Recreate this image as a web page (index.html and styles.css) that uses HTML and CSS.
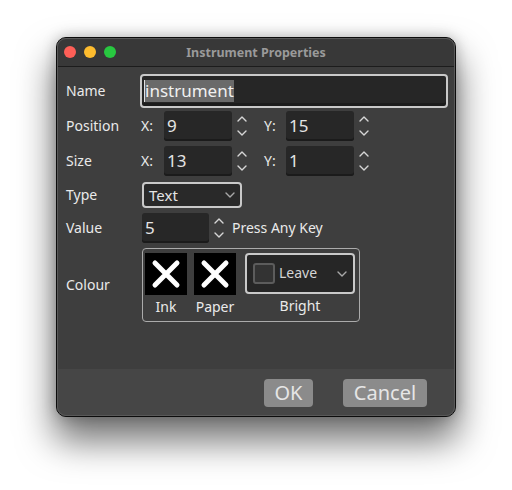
FILE: index.html
```html
<!DOCTYPE html>
<html>
<head>
<meta charset="utf-8">
<link rel="stylesheet" href="styles.css">
</head>
<body>
<div class="stage">
<div class="window">
  <div class="titlebar">
    <div class="lights">
      <span class="light red"></span><span class="light yellow"></span><span class="light green"></span>
    </div>
    <div class="title">Instrument Properties</div>
  </div>
  <div class="content">
    <div class="row row-name">
      <div class="label">Name</div>
      <div class="textinput"><span class="sel">instrument</span></div>
    </div>
    <div class="row row-pos">
      <div class="label">Position</div>
      <div class="field">
        <span class="axis">X:</span>
        <div class="spin">9</div>
        <div class="arrows"><svg width="10" height="24" viewBox="0 0 10 24"><path d="M1 7 L5 3 L9 7" /><path d="M1 17 L5 21 L9 17" /></svg></div>
        <span class="axis axis-y">Y:</span>
        <div class="spin">15</div>
        <div class="arrows"><svg width="10" height="24" viewBox="0 0 10 24"><path d="M1 7 L5 3 L9 7" /><path d="M1 17 L5 21 L9 17" /></svg></div>
      </div>
    </div>
    <div class="row row-size">
      <div class="label">Size</div>
      <div class="field">
        <span class="axis">X:</span>
        <div class="spin">13</div>
        <div class="arrows"><svg width="10" height="24" viewBox="0 0 10 24"><path d="M1 7 L5 3 L9 7" /><path d="M1 17 L5 21 L9 17" /></svg></div>
        <span class="axis axis-y">Y:</span>
        <div class="spin">1</div>
        <div class="arrows"><svg width="10" height="24" viewBox="0 0 10 24"><path d="M1 7 L5 3 L9 7" /><path d="M1 17 L5 21 L9 17" /></svg></div>
      </div>
    </div>
    <div class="row row-type">
      <div class="label">Type</div>
      <div class="combo combo-type">
        <span>Text</span>
        <svg class="chev" width="10" height="6" viewBox="0 0 10 6"><path d="M1 1 L5 5 L9 1" /></svg>
      </div>
    </div>
    <div class="row row-value">
      <div class="label">Value</div>
      <div class="field field-value">
        <div class="spin spin-value">5</div>
        <div class="arrows"><svg width="10" height="24" viewBox="0 0 10 24"><path d="M1 7 L5 3 L9 7" /><path d="M1 17 L5 21 L9 17" /></svg></div>
        <span class="hint">Press Any Key</span>
      </div>
    </div>
    <div class="row row-colour">
      <div class="label">Colour</div>
      <div class="group">
        <div class="gcol">
          <div class="swatch"><svg width="42" height="42" viewBox="0 0 42 42"><path d="M10 10 L32 32 M32 10 L10 32" /></svg></div>
          <div class="glabel">Ink</div>
        </div>
        <div class="gcol">
          <div class="swatch"><svg width="42" height="42" viewBox="0 0 42 42"><path d="M10 10 L32 32 M32 10 L10 32" /></svg></div>
          <div class="glabel">Paper</div>
        </div>
        <div class="gcol">
          <div class="combo combo-bright">
            <span class="check"></span>
            <span class="leave">Leave</span>
            <svg class="chev" width="10" height="6" viewBox="0 0 10 6"><path d="M1 1 L5 5 L9 1" /></svg>
          </div>
          <div class="glabel">Bright</div>
        </div>
      </div>
    </div>
  </div>
  <div class="footer">
    <div class="btn btn-ok">OK</div>
    <div class="btn btn-cancel">Cancel</div>
  </div>
</div>
</div>
</body>
</html>
```
FILE: styles.css
```css
html, body {
  margin: 0;
  padding: 0;
  background: #ffffff;
}
body {
  font-family: "Noto Sans", "Open Sans", sans-serif;
  color: #e8e8e8;
}
.stage {
  width: 512px;
  height: 490px;
  padding: 37px 0 0 56px;
  box-sizing: border-box;
}
.window {
  position: relative;
  width: 400px;
  height: 380px;
  box-sizing: border-box;
  border: 1px solid #0c0c0c;
  border-radius: 10px;
  background: #3e3e3e;
  box-shadow: 0 22px 36px 2px rgba(0, 0, 0, 0.55), 0 0 14px rgba(0, 0, 0, 0.25);
  display: flex;
  flex-direction: column;
}
.window::after {
  content: "";
  position: absolute;
  inset: 0;
  border-radius: 9px;
  box-shadow: inset 0 0 0 1px #595959;
  pointer-events: none;
}
.titlebar {
  height: 28px;
  flex: none;
  background: #383838;
  border-bottom: 1px solid #1c1c1c;
  border-radius: 9px 9px 0 0;
  position: relative;
  display: flex;
  align-items: center;
  justify-content: center;
}
.lights {
  position: absolute;
  left: 7px;
  top: 8px;
  display: flex;
  gap: 8px;
}
.light {
  width: 12px;
  height: 12px;
  border-radius: 50%;
}
.red { background: #fe5f57; }
.yellow { background: #febc2e; }
.green { background: #28c840; }
.title {
  font-size: 12.5px;
  font-weight: bold;
  color: #9a9a9a;
  padding-top: 1px;
}
.content {
  flex: 1;
  padding: 7px 7px 0 9px;
  display: flex;
  flex-direction: column;
}
.row {
  display: flex;
  align-items: center;
}
.label {
  width: 74px;
  flex: none;
  font-size: 14px;
  color: #eaeaea;
  padding-bottom: 2px;
}
.row-name { height: 34px; }
.row-pos { height: 30px; margin-top: 3px; }
.row-size { height: 30px; margin-top: 5px; }
.row-type { height: 26px; margin-top: 6px; }
.row-value { height: 30px; margin-top: 5px; }
.row-colour { height: 74px; margin-top: 5px; }

.textinput {
  flex: 1;
  height: 34px;
  box-sizing: border-box;
  border: 2px solid #c9c9c9;
  border-radius: 4px;
  background: #262626;
  box-shadow: inset 0 -3px 0 #1c1c1c;
  display: flex;
  align-items: center;
  padding-left: 2px;
  font-size: 17px;
  color: #f0f0f0;
}
.sel {
  background: #6a6a6a;
  line-height: 22px;
  border-left: 1px solid #e0e0e0;
}
.field {
  display: flex;
  align-items: center;
  padding-left: 1px;
}
.field-value {
  padding-left: 2px;
}
.axis {
  width: 23px;
  font-size: 14px;
  color: #eaeaea;
  padding-bottom: 2px;
}
.axis-y {
  width: 22px;
  margin-left: 12px;
}
.spin {
  width: 68px;
  height: 30px;
  box-sizing: border-box;
  background: #272727;
  border-radius: 3px;
  box-shadow: inset 0 -2px 0 #1b1b1b;
  font-size: 17px;
  color: #e4e4e4;
  padding-left: 3px;
  line-height: 29px;
}
.spin-value {
  width: 67px;
}
.arrows {
  width: 20px;
  display: flex;
  justify-content: center;
}
.arrows svg path, .chev path {
  fill: none;
  stroke: #d6d6d6;
  stroke-width: 1.4;
  stroke-linecap: round;
  stroke-linejoin: round;
}
.hint {
  font-size: 14px;
  color: #eaeaea;
  margin-left: 3px;
  padding-bottom: 2px;
}
.combo {
  box-sizing: border-box;
  border: 2px solid #c9c9c9;
  border-radius: 4px;
  background: #292929;
  display: flex;
  align-items: center;
}
.combo-type {
  margin-left: 2px;
  width: 100px;
  height: 26px;
  padding: 0 5px 0 5px;
  font-size: 15px;
  color: #e4e4e4;
  justify-content: space-between;
}
.combo-type .chev path, .combo-bright .chev path {
  stroke: #a8a8a8;
}
.group {
  margin-left: 2px;
  width: 218px;
  height: 74px;
  box-sizing: border-box;
  border: 1px solid #ababab;
  border-radius: 4px;
  display: flex;
  padding: 4px 0 0 2px;
  gap: 7px;
}
.gcol {
  display: flex;
  flex-direction: column;
  align-items: center;
}
.gcol:last-child {
  margin-left: 2px;
}
.swatch {
  width: 42px;
  height: 42px;
  background: #000;
}
.swatch svg {
  display: block;
}
.swatch path {
  stroke: #ffffff;
  stroke-width: 5;
  stroke-linecap: round;
  fill: none;
}
.glabel {
  font-size: 14px;
  color: #eaeaea;
  margin-top: 2px;
  line-height: 20px;
}
.combo-bright {
  width: 110px;
  height: 41px;
  background: #262626;
  padding: 0 6px;
}
.check {
  width: 22px;
  height: 21px;
  box-sizing: border-box;
  border: 2px solid #5c5c5c;
  border-radius: 3px;
  background: #333333;
}
.leave {
  font-size: 14px;
  color: #d4d4d4;
  margin-left: 4px;
  flex: 1;
  padding-bottom: 2px;
}
.footer {
  height: 47px;
  flex: none;
  background: #464646;
  border-radius: 0 0 9px 9px;
  display: flex;
  justify-content: flex-end;
  align-items: flex-start;
  padding: 10px 28px 0 0;
  box-sizing: border-box;
  gap: 30px;
}
.btn {
  height: 28px;
  border-radius: 4px;
  background: #8b8b8b;
  color: #e6e6e6;
  font-size: 20px;
  line-height: 27px;
  text-align: center;
}
.btn-ok { width: 49px; }
.btn-cancel { width: 84px; }
```
